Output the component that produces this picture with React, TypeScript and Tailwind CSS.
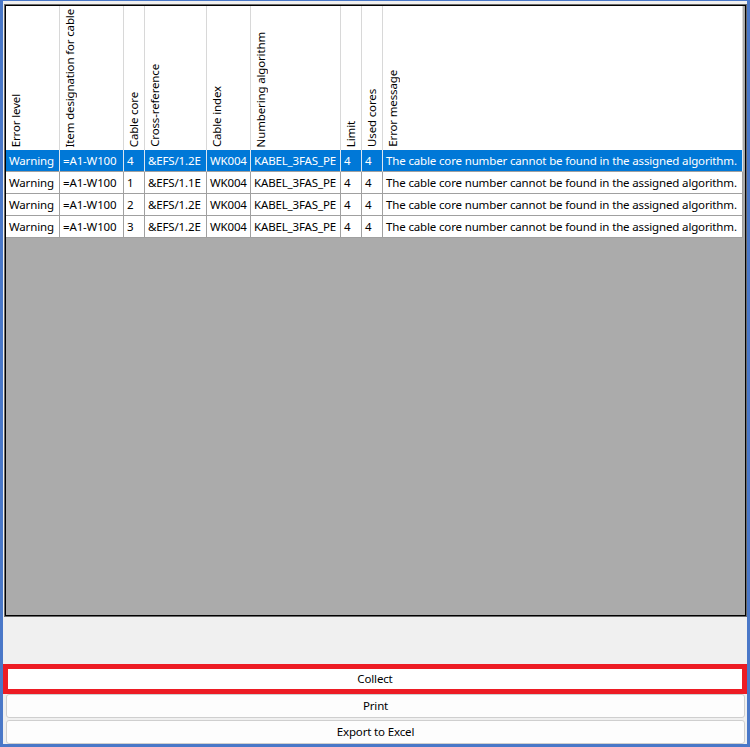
import React from "react";

const cols = [
  { title: "Error level", w: "w-[54px]" },
  { title: "Item designation for cable", w: "w-[64px]" },
  { title: "Cable core", w: "w-[21px]" },
  { title: "Cross-reference", w: "w-[62px]" },
  { title: "Cable index", w: "w-[44px]" },
  { title: "Numbering algorithm", w: "w-[90px]" },
  { title: "Limit", w: "w-[21px]" },
  { title: "Used cores", w: "w-[21px]" },
  { title: "Error message", w: "w-[360px]" },
];

const msg = "The cable core number cannot be found in the assigned algorithm.";
const rows = [
  ["Warning", "=A1-W100", "4", "&EFS/1.2E", "WK004", "KABEL_3FAS_PE", "4", "4", msg],
  ["Warning", "=A1-W100", "1", "&EFS/1.1E", "WK004", "KABEL_3FAS_PE", "4", "4", msg],
  ["Warning", "=A1-W100", "2", "&EFS/1.2E", "WK004", "KABEL_3FAS_PE", "4", "4", msg],
  ["Warning", "=A1-W100", "3", "&EFS/1.2E", "WK004", "KABEL_3FAS_PE", "4", "4", msg],
];

export default function App() {
  return (
    <div
      className="w-[750px] h-[747px] flex flex-col bg-[#f0f0f0] border-l-[3px] border-r-[3px] border-t border-b-[3px] border-[#4a78c8] text-[11.5px] tracking-[-0.15px] text-black overflow-hidden"
      style={{ fontFamily: '"Noto Sans", "Open Sans", sans-serif' }}
    >
      <div className="mt-[3px] ml-[1px] h-[613px] border border-[#696969] bg-[#ababab]">
        <div className="h-full border border-black bg-[#ababab] flex flex-col">
          {/* header */}
          <div className="flex h-[144px] shrink-0">
            {cols.map((c) => (
              <div
                key={c.title}
                className={`${c.w} shrink-0 h-full bg-white border-r border-[#d8d8d8] flex items-end justify-start pb-[3px] pl-[2px] overflow-hidden`}
              >
                <span className="[writing-mode:vertical-rl] rotate-180 whitespace-nowrap leading-[16px]">
                  {c.title}
                </span>
              </div>
            ))}
          </div>
          {rows.map((r, ri) => {
            const sel = ri === 0;
            return (
              <div key={ri} className="flex h-[22px] shrink-0">
                {r.map((v, ci) => (
                  <div
                    key={ci}
                    className={`${cols[ci].w} shrink-0 h-full border-r border-b pl-[3px] flex items-center whitespace-nowrap overflow-hidden ${
                      sel ? "bg-[#0078d7] text-white border-r-[#dce6f0] border-b-[#a0a0a0]" : "bg-white border-[#a0a0a0]"
                    }`}
                  >
                    {v}
                  </div>
                ))}
              </div>
            );
          })}
        </div>
      </div>
      <div className="h-[47px] shrink-0" />
      <div className="h-[30px] shrink-0 border-[5px] border-[#ed1c24] bg-white flex items-center justify-center">
        Collect
      </div>
      <div className="h-[24px] shrink-0 ml-[3px] mr-[2px] border border-[#cfcfcf] rounded-[3px] bg-[#fdfdfd] flex items-center justify-center">
        Print
      </div>
      <div className="h-[24px] shrink-0 mt-[2px] ml-[3px] mr-[2px] border border-[#cfcfcf] rounded-[3px] bg-[#fdfdfd] flex items-center justify-center">
        Export to Excel
      </div>
    </div>
  );
}
